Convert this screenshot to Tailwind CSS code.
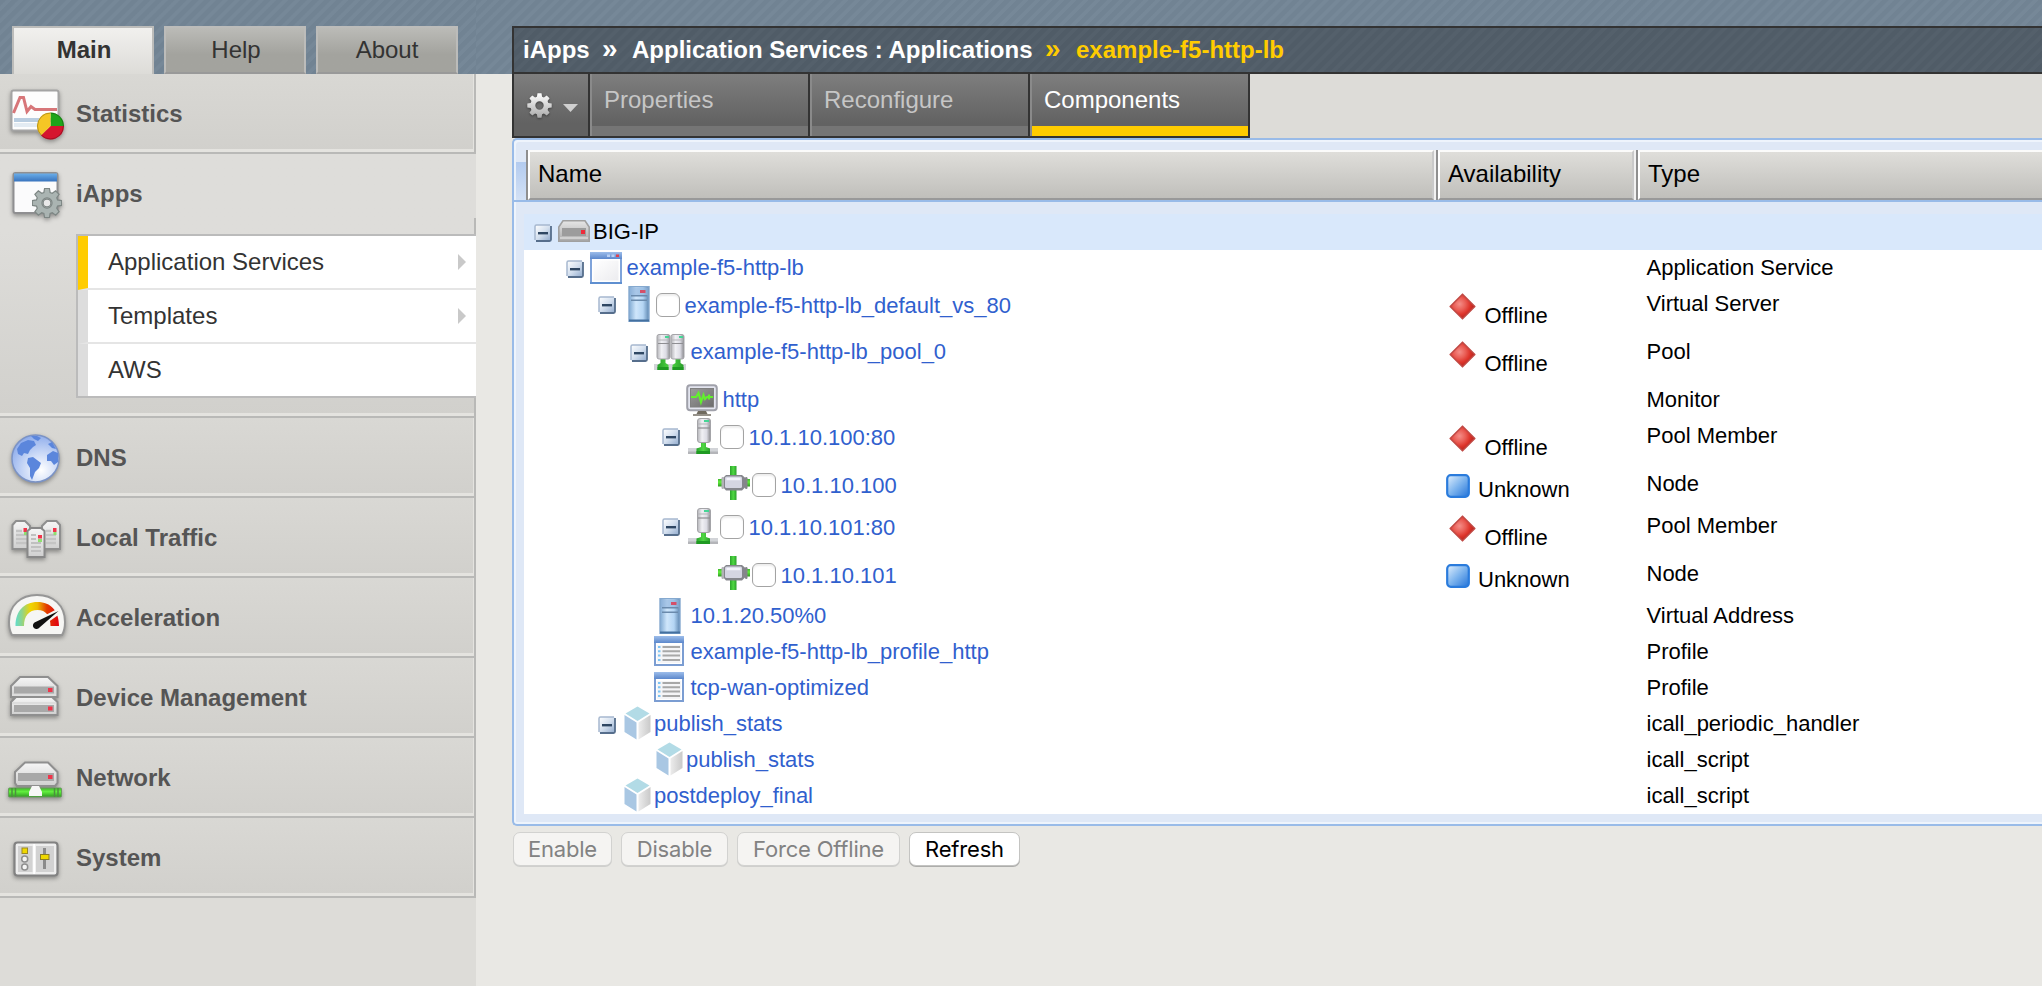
<!DOCTYPE html>
<html lang="en">
<head>
<meta charset="utf-8">
<title>iApps - Application Services</title>
<script src="https://cdn.jsdelivr.net/npm/@tailwindcss/browser@4"></script>
</head>
<body class="w-[2042px] h-[986px] overflow-hidden bg-[#e9e8e4] text-black font-['Liberation_Sans',Arial,sans-serif]">

<!-- Icon library -->
<svg class="absolute w-0 h-0" aria-hidden="true">
  <defs>
    <linearGradient id="gMinus" x1="0" y1="0" x2="1" y2="1"><stop offset="0" stop-color="#ffffff"/><stop offset=".5" stop-color="#d3dfee"/><stop offset="1" stop-color="#8fa9cc"/></linearGradient>
    <linearGradient id="gGrey" x1="0" y1="0" x2="0" y2="1"><stop offset="0" stop-color="#e6e6e6"/><stop offset="1" stop-color="#aaaaaa"/></linearGradient>
    <linearGradient id="gSilver" x1="0" y1="0" x2="0" y2="1"><stop offset="0" stop-color="#f6f6f6"/><stop offset="1" stop-color="#cfcfcf"/></linearGradient>
    <linearGradient id="gBlueV" x1="0" y1="0" x2="0" y2="1"><stop offset="0" stop-color="#6aaeea"/><stop offset="1" stop-color="#3873bd"/></linearGradient>
    <linearGradient id="gServer" x1="0" y1="0" x2="1" y2="0"><stop offset="0" stop-color="#7fa9d2"/><stop offset=".35" stop-color="#cfe6fb"/><stop offset=".7" stop-color="#b4d5f4"/><stop offset="1" stop-color="#5d86b0"/></linearGradient>
    <linearGradient id="gTower" x1="0" y1="0" x2="1" y2="0"><stop offset="0" stop-color="#b4b4b8"/><stop offset=".35" stop-color="#f0f0f4"/><stop offset=".7" stop-color="#dcdce4"/><stop offset="1" stop-color="#8a8a8e"/></linearGradient>
    <linearGradient id="gGreenH" x1="0" y1="0" x2="1" y2="0"><stop offset="0" stop-color="#2aa32a"/><stop offset=".5" stop-color="#4fd843"/><stop offset="1" stop-color="#2a9e2b"/></linearGradient>
    <linearGradient id="gGreenV" x1="0" y1="0" x2="0" y2="1"><stop offset="0" stop-color="#3fb42c"/><stop offset=".4" stop-color="#62ef3e"/><stop offset="1" stop-color="#2f9a22"/></linearGradient>
    <linearGradient id="gWin" x1="0" y1="0" x2="1" y2="1"><stop offset="0" stop-color="#ffffff"/><stop offset="1" stop-color="#ececef"/></linearGradient>
    <linearGradient id="gWinBar" x1="0" y1="0" x2="0" y2="1"><stop offset="0" stop-color="#9dbdea"/><stop offset="1" stop-color="#5c88cc"/></linearGradient>
    <radialGradient id="gRed" cx=".38" cy=".4" r=".6"><stop offset="0" stop-color="#f48e88"/><stop offset=".4" stop-color="#ea5f57"/><stop offset=".7" stop-color="#de352c"/><stop offset="1" stop-color="#b7231c"/></radialGradient>
    <linearGradient id="gSquare" x1="0" y1="0" x2="1" y2="1"><stop offset="0" stop-color="#e2f0fd"/><stop offset=".5" stop-color="#7db4ee"/><stop offset="1" stop-color="#2373d8"/></linearGradient>
    <linearGradient id="gCubeR" x1="0" y1="0" x2="1" y2="0"><stop offset="0" stop-color="#ececec"/><stop offset="1" stop-color="#c9c9c9"/></linearGradient>
    <linearGradient id="gGauge" x1="0" y1="0" x2="1" y2="0"><stop offset="0" stop-color="#62dccb"/><stop offset=".15" stop-color="#8fd48c"/><stop offset=".35" stop-color="#f0d400"/><stop offset=".5" stop-color="#eebc00"/><stop offset=".72" stop-color="#e23a00"/><stop offset="1" stop-color="#e20012"/></linearGradient>
    <radialGradient id="gGlobe" cx=".62" cy=".75" r=".75"><stop offset="0" stop-color="#ffffff"/><stop offset=".5" stop-color="#c9d8f6"/><stop offset="1" stop-color="#8fadec"/></radialGradient>
    <linearGradient id="gCog" x1="0" y1="0" x2="0" y2="1"><stop offset="0" stop-color="#ffffff"/><stop offset="1" stop-color="#a9a9a9"/></linearGradient>
    <linearGradient id="gScreen" x1="0" y1="0" x2="1" y2="1"><stop offset="0" stop-color="#9c9c9c"/><stop offset="1" stop-color="#6c6c6c"/></linearGradient>

    <symbol id="minus" viewBox="0 0 18 18">
      <rect x="1" y="1" width="16" height="16" rx="2" fill="url(#gMinus)"/>
      <path d="M1 16V2.500Q1 1 2.500 1H16" fill="none" stroke="#a7b8cf" stroke-width="1.500"/>
      <path d="M2 17H15.500Q17 17 17 15.500V2" fill="none" stroke="#566e8c" stroke-width="1.800"/>
      <rect x="4" y="8" width="10" height="2.400" fill="#2f4763"/>
    </symbol>
    <symbol id="drive" viewBox="0 0 32 22">
      <path d="M5 .8H27L31.200 7V21.200H.8V7Z" fill="url(#gGrey)" stroke="#a0a0a0" stroke-width="1.600"/>
      <rect x="4" y="8" width="24" height="8" fill="#9c9c9c"/><rect x="2" y="17" width="28" height="2" fill="#d0d0d0"/>
      <rect x="23" y="10" width="4" height="4" fill="#ee2b3a"/>
    </symbol>
    <symbol id="window" viewBox="0 0 32 32">
      <rect x="1" y="1" width="30" height="30" fill="#fff" stroke="#7fa3da" stroke-width="2"/>
      <rect x="0" y="0" width="32" height="7" fill="url(#gWinBar)"/>
      <rect x="17" y="2.500" width="3" height="2.500" fill="#b9d0f3"/><rect x="21.500" y="2.500" width="3" height="2.500" fill="#b9d0f3"/><rect x="26" y="2.500" width="3" height="2.500" fill="#e0404e"/>
      <rect x="3.500" y="8.500" width="25" height="20" fill="url(#gWin)"/><path d="M0 31H32" stroke="#5f8fd0" stroke-width="2"/>
    </symbol>
    <symbol id="vserver" viewBox="0 0 22 36">
      <rect x="1" y=".7" width="20" height="34.600" fill="url(#gServer)" stroke="#85a9cf" stroke-width="1.400"/>
      <rect x="2" y="2" width="18" height="7" fill="#8fb3da" opacity=".6"/><rect x="12" y="4" width="5.500" height="3" fill="#d4506a"/>
      <rect x="3" y="9" width="16" height="1.500" fill="#6a8aac"/><rect x="3" y="13.500" width="16" height="1.500" fill="#6a8aac"/><rect x="1" y="33.500" width="20" height="2" fill="#44709f"/>
    </symbol>
    <symbol id="pool" viewBox="0 0 32 36">
      <rect x="0" y="30" width="32" height="6" fill="#d2d4d8"/>
      <path d="M6.500 24h5v5l3 2v5H3.500v-5l3-2zM21.500 24h5v5l3 2v5H18.500v-5l3-2z" fill="url(#gGreenH)"/><path d="M3.500 33h11v3h-11zM18.500 33h11v3h-11z" fill="#1f9a22"/>
      <rect x="3" y=".5" width="13" height="24.500" rx="2" fill="url(#gTower)" stroke="#a4a4a8"/><rect x="17" y=".5" width="13" height="24.500" rx="2" fill="url(#gTower)" stroke="#a4a4a8"/>
      <path d="M4 9.500h11M18 9.500h11" stroke="#8e8e92" stroke-width="1.200"/><path d="M4 6h11M18 6h11" stroke="#b5b5b9"/><path d="M11 3h4M25 3h4" stroke="#45d695" stroke-width="2"/>
    </symbol>
    <symbol id="member" viewBox="0 0 30 36">
      <rect x="0" y="30" width="30" height="6" fill="#d2d4d8"/><rect x="0" y="33.500" width="30" height="2.500" fill="#b4b5b9"/>
      <path d="M13 24h5v5l4 1.500V36H8.500v-5.500L13 29z" fill="url(#gGreenH)"/><rect x="8.500" y="33" width="13.500" height="3" fill="#1f9a22"/>
      <rect x="9.500" y=".5" width="13" height="24" rx="2.500" fill="url(#gTower)" stroke="#a4a4a8"/>
      <path d="M10 10h12" stroke="#8e8e92" stroke-width="1.200"/><path d="M10 6h12" stroke="#b5b5b9"/><path d="M16 3h5" stroke="#45d695" stroke-width="2"/>
    </symbol>
    <symbol id="node" viewBox="0 0 32 34">
      <rect x="12" y="0" width="6.500" height="34" fill="url(#gGreenH)"/><rect x="0" y="13" width="32" height="7.500" fill="url(#gGreenV)"/>
      <path d="M8 9H24L28.500 13V20L24 24.500H8L4 20V13Z" fill="#85868c"/><rect x="3.500" y="11" width="2.500" height="12" rx="1.200" fill="#b2b2b6"/><rect x="27" y="11" width="2.500" height="12" rx="1.200" fill="#85858a"/>
      <rect x="7" y="10.500" width="17" height="11.500" rx="1.500" fill="#d5d5e2"/><path d="M8.500 13H22.500" stroke="#f3f3fa" stroke-width="2.500"/>
    </symbol>
    <symbol id="monitor" viewBox="0 0 32 32">
      <rect x="1.200" y="1.200" width="29.600" height="25" rx="3" fill="#e3e5ef" stroke="#a0a1aa" stroke-width="2"/>
      <rect x="4.500" y="4.500" width="23" height="18.500" fill="url(#gScreen)" stroke="#808080"/>
      <path d="M5 13H10L12.500 9 15 18 17.500 11 19 15 21 13H27M23 10.500V15.500" fill="none" stroke="#62f02e" stroke-width="2.200"/>
      <path d="M12 27H20L21.500 30H10.500Z" fill="#6f6a5f"/><rect x="7" y="30" width="18" height="2" fill="#96928a"/>
    </symbol>
    <symbol id="profile" viewBox="0 0 30 30">
      <rect x="1" y="1" width="28" height="28" fill="#fff" stroke="#7b9dd2" stroke-width="2"/><rect x="0" y="0" width="30" height="7" fill="url(#gWinBar)"/>
      <rect x="3" y="9" width="24" height="18" fill="#f5f5f7"/>
      <path d="M8.500 11H26M8.500 15.300H26M8.500 19.600H26M8.500 24H26" stroke="#a8a8a8" stroke-width="2"/><path d="M4 11H6.500M4 15.300H6.500M4 19.600H6.500M4 24H6.500" stroke="#7cc4f4" stroke-width="2"/>
    </symbol>
    <symbol id="cube" viewBox="0 0 27 34">
      <path d="M13.500 .5L25.500 7.500 13.500 15 1.500 7.500Z" fill="#b2dbe6"/><path d="M.5 9L12.500 16.500V33.500L.5 26Z" fill="#a9c7e3"/><path d="M26.500 9L14.500 16.500V33.500L26.500 26Z" fill="url(#gCubeR)"/>
    </symbol>
    <symbol id="diamond" viewBox="0 0 27 27"><path d="M13.500 1.200L25.800 13.500 13.500 25.800 1.200 13.500Z" fill="url(#gRed)" stroke="#c04a45" stroke-width="1.600" stroke-linejoin="round"/></symbol>
    <symbol id="square" viewBox="0 0 24 24"><rect x="1.200" y="1.200" width="21.600" height="21.600" rx="3.500" fill="url(#gSquare)" stroke="#2a7bdc" stroke-width="2.200"/></symbol>
    <symbol id="cog" viewBox="-12.500 -12.500 25 25">
      <path d="M-2-12.200H2L2.600-8.800 4.400-8.100 7.200-10.100 10.100-7.200 8.100-4.400 8.800-2.600 12.200-2V2L8.800 2.600 8.100 4.400 10.100 7.200 7.200 10.100 4.400 8.100 2.600 8.800 2 12.200H-2L-2.600 8.800-4.400 8.100-7.200 10.100-10.100 7.200-8.100 4.400-8.800 2.600-12.200 2V-2L-8.800-2.600-8.100-4.400-10.100-7.200-7.200-10.100-4.400-8.100-2.600-8.800ZM0-4.200A4.200 4.200 0 1 0 0 4.200 4.200 4.200 0 1 0 0-4.200Z" fill-rule="evenodd"/>
    </symbol>
  </defs>
</svg>

<div class="flex h-[986px]">

  <!-- Sidebar -->
  <aside class="w-[476px] shrink-0 flex flex-col bg-[#dddcd8]">
    <nav class="h-[74px] shrink-0 flex items-end pl-3 gap-[10px] text-2xl text-[#333] text-center bg-[#728495] bg-[repeating-linear-gradient(135deg,#718393_0px,#718393_4px,#768898_5px,#768898_8px,#718393_8.5px)]">
      <div class="w-[142px] h-12 border-2 border-b-0 border-[#bcbcba] bg-linear-to-b from-[#f1f0ee] to-[#dddcd8] font-bold leading-[44px] indent-0.5">Main</div>
      <div class="w-[142px] h-12 border-2 border-[#bcbcba] border-b-[#999] bg-linear-to-b from-[#bbbbb7] to-[#a3a39e] to-60% leading-[44px] indent-0.5">Help</div>
      <div class="w-[142px] h-12 border-2 border-[#bcbcba] border-b-[#999] bg-linear-to-b from-[#bbbbb7] to-[#a3a39e] to-60% leading-[44px]">About</div>
    </nav>

    <div class="h-20 shrink-0 flex border-b-2 border-r-2 border-[#b9b9b7] bg-linear-to-b from-[#d9d8d4] to-[#d1d0cc] text-2xl font-bold text-[#555] shadow-[inset_-1px_-3px_0_#e4e3df]">
      <svg class="w-[76px] h-20 shrink-0 drop-shadow-[0_2px_2px_rgba(0,0,0,.35)]" viewBox="0 0 76 80">
        <rect x="11.500" y="16.500" width="47" height="40" rx="2" fill="#fdfdfd" stroke="#a4a4a4" stroke-width="2"/>
        <path d="M14 46H56" stroke="#b9cde0" stroke-width="4"/><path d="M14 51H50" stroke="#e3ebf2" stroke-width="4"/>
        <path d="M13.500 39L20 23.500H23.500L27 37.500 31 32.500 35 35.500H57" fill="none" stroke="#d77679" stroke-width="3"/>
        <path d="M50.500 52V38.500A13.500 13.500 0 0 1 64 52Z" fill="#1ea41a"/><path d="M50.500 52H64A13.500 13.500 0 0 1 41 61.500Z" fill="#d6152f"/><path d="M50.500 52L41 61.500A13.500 13.500 0 0 1 50.500 38.500Z" fill="#f5c625"/><circle cx="50.500" cy="52" r="13" fill="none" stroke="#000" stroke-opacity=".25"/>
      </svg><span class="leading-[79px]">Statistics</span>
    </div>

    <div class="h-[264px] shrink-0 flex flex-col bg-linear-to-b from-[#dedddA] from-30% to-[#d1d0cc] border-b-2 border-[#b9b9b7] shadow-[inset_0_-3px_0_#e4e3df]">
      <div class="h-16 shrink-0 flex text-2xl font-bold text-[#555]">
        <svg class="w-[76px] h-20 shrink-0 drop-shadow-[0_2px_2px_rgba(0,0,0,.35)]" viewBox="0 0 76 80">
          <rect x="13.500" y="19" width="44" height="40" rx="2" fill="#fbfbfc" stroke="#8f8f91" stroke-width="2"/>
          <rect x="14" y="19.500" width="43" height="8" fill="url(#gBlueV)"/>
          <use href="#cog" x="32" y="34" width="30" height="30" fill="#aab4b2" stroke="#7d8684" stroke-width="1"/><circle cx="47" cy="49" r="4" fill="#e9e9e9" stroke="#7d8684" stroke-width="1.500"/>
        </svg><span class="leading-[79px]">iApps</span>
      </div>
      <div class="flex-1 border-r-2 border-[#b9b9b7] pt-4">
        <ul class="ml-[76px] w-[400px] relative border-2 border-r-0 border-[#bbb] bg-white text-2xl text-[#333]">
          <li class="h-[54px] flex items-center justify-between border-l-[10px] border-b-2 border-l-[#ffcc00] border-b-[#e5e5e5] pl-5 pr-[10px] leading-[52px]">Application Services<svg class="w-2 h-4" viewBox="0 0 8 16"><path d="M0 0L8 8 0 16Z" fill="#c9c9c9"/></svg></li>
          <li class="h-[54px] flex items-center justify-between border-l-[10px] border-b-2 border-l-[#dddddd] border-b-[#e5e5e5] pl-5 pr-[10px] leading-[52px]">Templates<svg class="w-2 h-4" viewBox="0 0 8 16"><path d="M0 0L8 8 0 16Z" fill="#c9c9c9"/></svg></li>
          <li class="h-[52px] border-l-[10px] border-l-[#dddddd] pl-5 leading-[51px]">AWS</li>
        </ul>
      </div>
    </div>

    <div class="h-20 shrink-0 flex border-b-2 border-r-2 border-[#b9b9b7] bg-linear-to-b from-[#d9d8d4] to-[#d1d0cc] text-2xl font-bold text-[#555] shadow-[inset_-1px_-3px_0_#e4e3df]">
      <svg class="w-[76px] h-20 shrink-0 drop-shadow-[0_2px_2px_rgba(0,0,0,.35)]" viewBox="0 0 76 80">
        <circle cx="35.500" cy="40.500" r="23.500" fill="url(#gGlobe)" stroke="#7b93c6" stroke-width="1.500"/>
        <g fill="#5b86dc"><path d="M17 31L21 25 28 22 34 23 36 27 33 29 30 32 28 36 24 35 22 38 18 36Z"/><path d="M31 18L37 18 41 20 38 23 34 21Z"/><path d="M28 40L33 39 41 45 39 50 35 54 32 62 30 58 30 50 27 45Z"/><path d="M47 37L53 33 58 35 58 44 54 47 51 43 47 43Z"/><path d="M48 26L52 24 56 31 52 30Z"/></g>
      </svg><span class="leading-[79px]">DNS</span>
    </div>

    <div class="h-20 shrink-0 flex border-b-2 border-r-2 border-[#b9b9b7] bg-linear-to-b from-[#d9d8d4] to-[#d1d0cc] text-2xl font-bold text-[#555] shadow-[inset_-1px_-3px_0_#e4e3df]">
      <svg class="w-[76px] h-20 shrink-0 drop-shadow-[0_2px_2px_rgba(0,0,0,.35)]" viewBox="0 0 76 80">
        <g fill="url(#gSilver)" stroke="#8f8f8f" stroke-width="2"><path d="M12.500 27L16 23H25L30 28V51H12.500Z"/><path d="M60 27L56.500 23H47L42 28V51H60Z"/></g>
        <path d="M16 33H22M16 37H27M16 41H27M16 45H27M46 33H51M46 37H56M46 41H56M46 45H56" stroke="#c4c4c4" stroke-width="2.500"/>
        <rect x="23.500" y="30" width="3.500" height="4" fill="#f0344a"/><rect x="53" y="30" width="3.500" height="4" fill="#f0344a"/><rect x="24" y="34" width="3" height="3" fill="#8ee070"/><rect x="53.500" y="34" width="3" height="3" fill="#8ee070"/>
        <path d="M27.500 33L31 30H41L44.500 33V59H27.500Z" fill="url(#gSilver)" stroke="#888" stroke-width="2"/>
        <path d="M31 37H36M31 41H36M31 45H41M31 49H41M31 53H41" stroke="#c0c0c0" stroke-width="2"/><rect x="38" y="37" width="4" height="3.500" fill="#f0344a"/><rect x="38" y="41" width="4" height="3" fill="#8ee070"/>
      </svg><span class="leading-[79px]">Local Traffic</span>
    </div>

    <div class="h-20 shrink-0 flex border-b-2 border-r-2 border-[#b9b9b7] bg-linear-to-b from-[#d9d8d4] to-[#d1d0cc] text-2xl font-bold text-[#555] shadow-[inset_-1px_-3px_0_#e4e3df]">
      <svg class="w-[76px] h-20 shrink-0 drop-shadow-[0_2px_2px_rgba(0,0,0,.35)]" viewBox="0 0 76 80">
        <path d="M12 57Q9 52 9 44C9 27 21 17 37 17S65 27 65 44Q65 52 62 57Z" fill="#f6f6f4" stroke="#969696" stroke-width="2"/>
        <path d="M15.500 48C15.500 33 24 24 37.500 24S59 33 59 48H50.500C50.500 38 46 32 37.500 32S24 38 24 48Z" fill="url(#gGauge)"/>
        <path d="M57 31L34.500 43A4 4 0 1 0 40.500 49.500L62 34.500Z" fill="#f6f6f4"/>
        <path d="M58.500 33L34.500 44.500A3.600 3.600 0 1 0 39.500 49.500Z" fill="#111"/>
      </svg><span class="leading-[79px]">Acceleration</span>
    </div>

    <div class="h-20 shrink-0 flex border-b-2 border-r-2 border-[#b9b9b7] bg-linear-to-b from-[#d9d8d4] to-[#d1d0cc] text-2xl font-bold text-[#555] shadow-[inset_-1px_-3px_0_#e4e3df]">
      <svg class="w-[76px] h-20 shrink-0 drop-shadow-[0_2px_2px_rgba(0,0,0,.35)]" viewBox="0 0 76 80">
        <g stroke="#8f8f8f" stroke-width="2" fill="url(#gSilver)"><path d="M11 44L16 39H52L57.500 44V57H11Z"/><path d="M11 28L20 19H48L57.500 28V39H11Z"/></g>
        <rect x="14" y="28.500" width="40" height="7" fill="#a8a8a8"/><rect x="14" y="47" width="40" height="7" fill="#a8a8a8"/>
        <path d="M12 37H56M12 45H56" stroke="#ddd" stroke-width="2"/><rect x="48" y="30" width="4.500" height="4" fill="#f0344a"/><rect x="48" y="48.500" width="4.500" height="4" fill="#f0344a"/>
      </svg><span class="leading-[79px]">Device Management</span>
    </div>

    <div class="h-20 shrink-0 flex border-b-2 border-r-2 border-[#b9b9b7] bg-linear-to-b from-[#d9d8d4] to-[#d1d0cc] text-2xl font-bold text-[#555] shadow-[inset_-1px_-3px_0_#e4e3df]">
      <svg class="w-[76px] h-20 shrink-0 drop-shadow-[0_2px_2px_rgba(0,0,0,.35)]" viewBox="0 0 76 80">
        <path d="M15 34L25 24.500H48L57.500 34V45L55 48H17L15 45Z" fill="url(#gSilver)" stroke="#8f8f8f" stroke-width="2"/>
        <rect x="18" y="35" width="36" height="8" fill="#a8a8a8"/><rect x="48" y="37" width="4.500" height="4" fill="#f0344a"/>
        <rect x="8.500" y="50" width="53" height="9" rx="1" fill="url(#gGreenV)" stroke="#6a9a5f"/><path d="M12 50V59M15.500 50V59M54.500 50V59M58 50V59" stroke="#4d8f40" stroke-width="1.500"/>
        <path d="M32 48H39L42 54V58H29V54Z" fill="#f7f7f7"/>
      </svg><span class="leading-[79px]">Network</span>
    </div>

    <div class="h-20 shrink-0 flex border-b-2 border-r-2 border-[#b9b9b7] bg-linear-to-b from-[#d9d8d4] to-[#d1d0cc] text-2xl font-bold text-[#555] shadow-[inset_-1px_-3px_0_#e4e3df]">
      <svg class="w-[76px] h-20 shrink-0 drop-shadow-[0_2px_2px_rgba(0,0,0,.35)]" viewBox="0 0 76 80">
        <rect x="14.500" y="24.500" width="43" height="33" rx="3" fill="#eeeeee" stroke="#828282" stroke-width="2.200"/>
        <rect x="18" y="28" width="14.500" height="26" fill="#d2d2d2"/><rect x="36" y="28" width="18" height="26" fill="#d2d2d2"/><path d="M34.200 26V56" stroke="#fff" stroke-width="2"/>
        <path d="M44.500 30V51" stroke="#8b8b8b" stroke-width="3"/><rect x="40.500" y="36.500" width="8.500" height="5" fill="#efd800" stroke="#8b7d26"/>
        <rect x="22" y="30" width="5.500" height="5.500" fill="#efd800" stroke="#9a8826"/><circle cx="24.700" cy="41" r="3" fill="#f4f4f4" stroke="#8f8f8f" stroke-width="1.500"/><circle cx="24.700" cy="49" r="3" fill="#f4f4f4" stroke="#8f8f8f" stroke-width="1.500"/>
      </svg><span class="leading-[79px]">System</span>
    </div>
  </aside>

  <!-- Main column -->
  <main class="flex-1 min-w-0 flex flex-col">
    <header class="h-[74px] shrink-0 pl-9 pt-[26px] bg-[#728495] bg-[repeating-linear-gradient(135deg,#718393_0px,#718393_4px,#768898_5px,#768898_8px,#718393_8.5px)]">
      <div class="h-12 flex border-2 border-r-0 border-[#333] pl-[9px] text-2xl leading-[44px] font-bold text-white whitespace-pre bg-[repeating-linear-gradient(135deg,#505c67_0px,#505c67_4px,#54606b_5px,#54606b_8px,#505c67_8.5px)]"><span class="w-[79px]">iApps</span><span class="w-[30px] text-[28px] leading-[42px]">»</span><span class="w-[413px]">Application Services : Applications</span><span class="w-[31px] text-[28px] leading-[42px] text-[#ffcc00]">»</span><span class="text-[#ffcc00]">example-f5-http-lb</span></div>
    </header>

    <div class="ml-9 h-16 shrink-0 flex bg-[#dddcd8] text-2xl text-[#c6c6c6]">
      <div class="w-[78px] flex border-x-2 border-b-2 border-[#333] bg-linear-to-b from-[#7e7e7e] to-[#626262] to-80% pl-[13px]">
        <svg class="w-[25px] h-[25px] mt-[19px] drop-shadow-[0_1px_1px_rgba(0,0,0,.4)]" viewBox="0 0 25 25"><use href="#cog" width="25" height="25" fill="url(#gCog)"/></svg>
        <svg class="w-[15px] h-2 mt-[30px] ml-[11px]" viewBox="0 0 15 8"><path d="M0 0H15L7.500 8Z" fill="#cfcfcf"/></svg>
      </div>
      <div class="w-[220px] flex flex-col border-r-2 border-b-2 border-[#333] bg-linear-to-b from-[#7e7e7e] to-[#626262] to-80% shadow-[inset_2px_0_0_#8a8a8a]"><span class="h-[52px] pl-[14px] leading-[51px]">Properties</span><span class="ml-0.5 h-[10px] bg-[#757575]"></span></div>
      <div class="w-[220px] flex flex-col border-r-2 border-b-2 border-[#333] bg-linear-to-b from-[#7e7e7e] to-[#626262] to-80% shadow-[inset_2px_0_0_#8a8a8a]"><span class="h-[52px] pl-[14px] leading-[51px]">Reconfigure</span><span class="ml-0.5 h-[10px] bg-[#757575]"></span></div>
      <div class="w-[220px] flex flex-col border-r-2 border-b-2 border-[#333] bg-linear-to-b from-[#7e7e7e] to-[#626262] to-80% shadow-[inset_2px_0_0_#8a8a8a] text-white"><span class="h-[52px] pl-[14px] leading-[51px]">Components</span><span class="ml-0.5 h-[10px] bg-[#ffcc00]"></span></div>
    </div>

    <!-- Component grid -->
    <section class="ml-9 h-[688px] shrink-0 flex flex-col border-2 border-r-0 border-[#99bbe8] rounded-l-[5px] bg-[#dfe8f6] shadow-[inset_2px_2px_0_#eef4fc,inset_0_-2px_0_#eef4fc]">
      <div class="h-[62px] shrink-0 flex pt-[10px] border-b-2 border-[#99bbe8] text-2xl leading-[43px]">
        <div class="w-3 shrink-0 border-l-2 border-[#e9f1fb] pt-3 flex"><div class="flex-1 bg-linear-to-b from-[#b3cbef] to-[#d3e1f5]"></div></div>
        <div class="w-[910px] h-[50px] flex border-l-2 border-r-2 border-l-[#8f8f8f] border-r-[#f2f2f2]"><div class="flex-1 border-2 border-t-[#fbfbfa] border-l-white border-r-[#c9c9c9] border-b-[#999] bg-linear-to-b from-[#dfdeda] to-[#c0bfbb] pl-2">Name</div></div>
        <div class="w-[200px] h-[50px] flex border-l-2 border-r-2 border-l-[#8f8f8f] border-r-[#f2f2f2]"><div class="flex-1 border-2 border-t-[#fbfbfa] border-l-white border-r-[#c9c9c9] border-b-[#999] bg-linear-to-b from-[#dfdeda] to-[#c0bfbb] pl-2">Availability</div></div>
        <div class="flex-1 h-[50px] flex border-l-2 border-l-[#8f8f8f]"><div class="flex-1 border-y-2 border-l-2 border-t-[#fbfbfa] border-l-white border-b-[#999] bg-linear-to-b from-[#dfdeda] to-[#c0bfbb] pl-2">Type</div></div>
      </div>

      <div class="ml-[10px] mt-3 bg-white text-[22px] leading-9 text-[#3060ce] whitespace-nowrap indent-px">
        <div class="h-9 flex items-start bg-[#d9e8fb] pl-[10px] text-black">
          <svg class="size-[18px] mt-[10px]"><use href="#minus"/></svg><svg class="w-8 h-[22px] mt-1.5 ml-1.5"><use href="#drive"/></svg><span class="ml-0.5">BIG-IP</span>
        </div>
        <div class="h-9 flex items-start">
          <div class="w-[922px] flex items-start pl-[42px]"><svg class="size-[18px] mt-[10px]"><use href="#minus"/></svg><svg class="size-8 mt-0.5 ml-1.5"><use href="#window"/></svg><span class="ml-[3.5px]">example-f5-http-lb</span></div>
          <div class="w-[199.5px]"></div><div class="text-black">Application Service</div>
        </div>
        <div class="h-12 flex items-start">
          <div class="w-[922px] flex items-start pl-[74px]"><svg class="size-[18px] mt-[10px]"><use href="#minus"/></svg><svg class="w-[22px] h-9 ml-[11.5px]"><use href="#vserver"/></svg><span class="size-6 mt-[7px] ml-[6.5px] rounded-[6px] border border-[#a3a3a3] bg-white shadow-[inset_0_2px_2px_#eee]"></span><span class="ml-[3.5px] mt-0.5">example-f5-http-lb_default_vs_80</span></div>
          <div class="w-[199.5px] flex items-start text-black"><svg class="size-[27px] mt-[7px] ml-[3px]"><use href="#diamond"/></svg><span class="ml-[7.5px] mt-3">Offline</span></div><div class="text-black">Virtual Server</div>
        </div>
        <div class="h-12 flex items-start">
          <div class="w-[922px] flex items-start pl-[106px]"><svg class="size-[18px] mt-[10px]"><use href="#minus"/></svg><svg class="w-8 h-9 ml-1.5"><use href="#pool"/></svg><span class="ml-[3.5px]">example-f5-http-lb_pool_0</span></div>
          <div class="w-[199.5px] flex items-start text-black"><svg class="size-[27px] mt-[7px] ml-[3px]"><use href="#diamond"/></svg><span class="ml-[7.5px] mt-3">Offline</span></div><div class="text-black">Pool</div>
        </div>
        <div class="h-9 flex items-start">
          <div class="w-[922px] flex items-start pl-[162px]"><svg class="size-8 mt-0.5"><use href="#monitor"/></svg><span class="ml-[3.5px]">http</span></div>
          <div class="w-[199.5px]"></div><div class="text-black">Monitor</div>
        </div>
        <div class="h-12 flex items-start">
          <div class="w-[922px] flex items-start pl-[138px]"><svg class="size-[18px] mt-[10px]"><use href="#minus"/></svg><svg class="w-[30px] h-9 ml-2"><use href="#member"/></svg><span class="size-6 mt-[7px] ml-0.5 rounded-[6px] border border-[#a3a3a3] bg-white shadow-[inset_0_2px_2px_#eee]"></span><span class="ml-[3.5px] mt-0.5">10.1.10.100:80</span></div>
          <div class="w-[199.5px] flex items-start text-black"><svg class="size-[27px] mt-[7px] ml-[3px]"><use href="#diamond"/></svg><span class="ml-[7.5px] mt-3">Offline</span></div><div class="text-black">Pool Member</div>
        </div>
        <div class="h-[42px] flex items-start">
          <div class="w-[922px] flex items-start pl-[194px]"><svg class="w-8 h-[34px]"><use href="#node"/></svg><span class="size-6 mt-[7px] ml-0.5 rounded-[6px] border border-[#a3a3a3] bg-white shadow-[inset_0_2px_2px_#eee]"></span><span class="ml-[3.5px] mt-0.5">10.1.10.100</span></div>
          <div class="w-[199.5px] flex items-start text-black"><svg class="size-6 mt-2"><use href="#square"/></svg><span class="ml-[7px] mt-1.5">Unknown</span></div><div class="text-black">Node</div>
        </div>
        <div class="h-12 flex items-start">
          <div class="w-[922px] flex items-start pl-[138px]"><svg class="size-[18px] mt-[10px]"><use href="#minus"/></svg><svg class="w-[30px] h-9 ml-2"><use href="#member"/></svg><span class="size-6 mt-[7px] ml-0.5 rounded-[6px] border border-[#a3a3a3] bg-white shadow-[inset_0_2px_2px_#eee]"></span><span class="ml-[3.5px] mt-0.5">10.1.10.101:80</span></div>
          <div class="w-[199.5px] flex items-start text-black"><svg class="size-[27px] mt-[7px] ml-[3px]"><use href="#diamond"/></svg><span class="ml-[7.5px] mt-3">Offline</span></div><div class="text-black">Pool Member</div>
        </div>
        <div class="h-[42px] flex items-start">
          <div class="w-[922px] flex items-start pl-[194px]"><svg class="w-8 h-[34px]"><use href="#node"/></svg><span class="size-6 mt-[7px] ml-0.5 rounded-[6px] border border-[#a3a3a3] bg-white shadow-[inset_0_2px_2px_#eee]"></span><span class="ml-[3.5px] mt-0.5">10.1.10.101</span></div>
          <div class="w-[199.5px] flex items-start text-black"><svg class="size-6 mt-2"><use href="#square"/></svg><span class="ml-[7px] mt-1.5">Unknown</span></div><div class="text-black">Node</div>
        </div>
        <div class="h-9 flex items-start">
          <div class="w-[922px] flex items-start pl-[135px]"><svg class="w-[22px] h-9"><use href="#vserver"/></svg><span class="ml-[8.5px]">10.1.20.50%0</span></div>
          <div class="w-[199.5px]"></div><div class="text-black">Virtual Address</div>
        </div>
        <div class="h-9 flex items-start">
          <div class="w-[922px] flex items-start pl-[130px]"><svg class="size-[30px] mt-0.5"><use href="#profile"/></svg><span class="ml-[5.5px]">example-f5-http-lb_profile_http</span></div>
          <div class="w-[199.5px]"></div><div class="text-black">Profile</div>
        </div>
        <div class="h-9 flex items-start">
          <div class="w-[922px] flex items-start pl-[130px]"><svg class="size-[30px] mt-0.5"><use href="#profile"/></svg><span class="ml-[5.5px]">tcp-wan-optimized</span></div>
          <div class="w-[199.5px]"></div><div class="text-black">Profile</div>
        </div>
        <div class="h-9 flex items-start">
          <div class="w-[922px] flex items-start pl-[74px]"><svg class="size-[18px] mt-[10px]"><use href="#minus"/></svg><svg class="w-[27px] h-[34px] ml-[7.5px]"><use href="#cube"/></svg><span class="ml-[2.5px]">publish_stats</span></div>
          <div class="w-[199.5px]"></div><div class="text-black">icall_periodic_handler</div>
        </div>
        <div class="h-9 flex items-start">
          <div class="w-[922px] flex items-start pl-[131.5px]"><svg class="w-[27px] h-[34px]"><use href="#cube"/></svg><span class="ml-[2.5px]">publish_stats</span></div>
          <div class="w-[199.5px]"></div><div class="text-black">icall_script</div>
        </div>
        <div class="h-9 flex items-start">
          <div class="w-[922px] flex items-start pl-[99.5px]"><svg class="w-[27px] h-[34px]"><use href="#cube"/></svg><span class="ml-[2.5px]">postdeploy_final</span></div>
          <div class="w-[199.5px]"></div><div class="text-black">icall_script</div>
        </div>
      </div>
    </section>

    <div class="mt-1.5 ml-[37px] flex gap-[9px] text-[22px] leading-8 tracking-[-0.2px] font-['Inter',sans-serif] text-[#828282]">
      <button class="w-[99px] h-[34px] rounded-[7px] border border-[#d2d2d0] bg-[#f5f4f2] shadow-[0_1px_0_#cfcfcd]">Enable</button>
      <button class="w-[107px] h-[34px] rounded-[7px] border border-[#d2d2d0] bg-[#f5f4f2] shadow-[0_1px_0_#cfcfcd]">Disable</button>
      <button class="w-[163px] h-[34px] rounded-[7px] border border-[#d2d2d0] bg-[#f5f4f2] shadow-[0_1px_0_#cfcfcd]">Force Offline</button>
      <button class="w-[111px] h-[34px] rounded-[7px] border border-[#c4c4c2] bg-white text-black shadow-[0_1px_0_#adadab]">Refresh</button>
    </div>
  </main>
</div>
</body>
</html>
